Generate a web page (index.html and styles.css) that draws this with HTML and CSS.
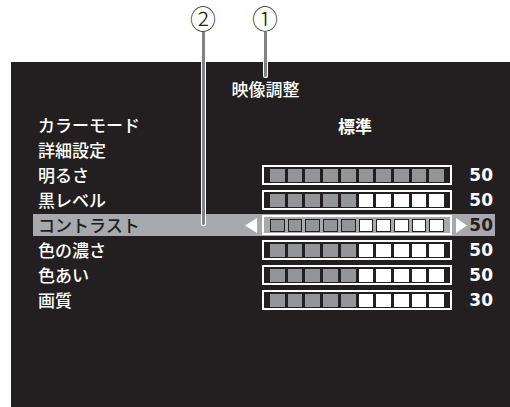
FILE: index.html
```html
<!DOCTYPE html>
<html lang="ja">

<head>
    <meta charset="UTF-8" />
    <meta name="viewport" content="width=device-width, initial-scale=1.0">
    <title>映像調整</title>
    <link rel="stylesheet" href="styles.css">
</head>

<body>
    <div class="page">
        <!-- callouts -->
        <span class="callout callout-2">②</span>
        <span class="callout callout-1">①</span>
        <span class="lead lead-2"></span>
        <span class="lead lead-1"></span>

        <div class="screen">
            <div class="title">映像調整</div>

            <div class="menu">
                <div class="row">
                    <span class="label">カラーモード</span>
                    <span class="mode">標準</span>
                </div>
                <div class="row">
                    <span class="label">詳細設定</span>
                </div>
                <div class="row">
                    <span class="label">明るさ</span>
                    <span class="arrow"></span>
                    <div class="bar">
                        <i class="on"></i><i class="on"></i><i class="on"></i><i class="on"></i><i class="on"></i>
                        <i class="on"></i><i class="on"></i><i class="on"></i><i class="on"></i><i class="on"></i>
                    </div>
                    <span class="arrow"></span>
                    <span class="value">50</span>
                </div>
                <div class="row">
                    <span class="label">黒レベル</span>
                    <span class="arrow"></span>
                    <div class="bar">
                        <i class="on"></i><i class="on"></i><i class="on"></i><i class="on"></i><i class="on"></i>
                        <i></i><i></i><i></i><i></i><i></i>
                    </div>
                    <span class="arrow"></span>
                    <span class="value">50</span>
                </div>
                <div class="row selected">
                    <span class="label">コントラスト</span>
                    <span class="arrow">
                        <svg width="12" height="15" viewBox="0 0 12 15"><polygon points="12,0 12,15 0,7.5" fill="#fff" /></svg>
                    </span>
                    <div class="bar">
                        <i class="on"></i><i class="on"></i><i class="on"></i><i class="on"></i><i class="on"></i>
                        <i></i><i></i><i></i><i></i><i></i>
                    </div>
                    <span class="arrow">
                        <svg width="11" height="15" viewBox="0 0 11 15"><polygon points="0,0 11,7.5 0,15" fill="#fff" /></svg>
                    </span>
                    <span class="value">50</span>
                </div>
                <div class="row">
                    <span class="label">色の濃さ</span>
                    <span class="arrow"></span>
                    <div class="bar">
                        <i class="on"></i><i class="on"></i><i class="on"></i><i class="on"></i><i class="on"></i>
                        <i></i><i></i><i></i><i></i><i></i>
                    </div>
                    <span class="arrow"></span>
                    <span class="value">50</span>
                </div>
                <div class="row">
                    <span class="label">色あい</span>
                    <span class="arrow"></span>
                    <div class="bar">
                        <i class="on"></i><i class="on"></i><i class="on"></i><i class="on"></i><i class="on"></i>
                        <i></i><i></i><i></i><i></i><i></i>
                    </div>
                    <span class="arrow"></span>
                    <span class="value">50</span>
                </div>
                <div class="row">
                    <span class="label">画質</span>
                    <span class="arrow"></span>
                    <div class="bar">
                        <i class="on"></i><i class="on"></i><i class="on"></i><i class="on"></i><i class="on"></i>
                        <i></i><i></i><i></i><i></i><i></i>
                    </div>
                    <span class="arrow"></span>
                    <span class="value">30</span>
                </div>
            </div>
        </div>
    </div>
</body>

</html>
```

FILE: styles.css
```css
body {
    margin: 0;
    background: #fff;
    font-family: "Noto Sans CJK JP", "Noto Sans", sans-serif;
}

.page {
    position: relative;
    width: 510px;
    height: 407px;
    overflow: hidden;
    padding-top: 62px;
    box-sizing: border-box;
}

.callout {
    position: absolute;
    top: 3px;
    font-size: 26px;
    line-height: 30px;
    font-weight: 300;
    color: #231f20;
}

.callout-2 {
    left: 190px;
}

.callout-1 {
    left: 252px;
}

.lead {
    position: absolute;
    z-index: 2;
    width: 3px;
    background: #808285;
    border: 1px solid #fff;
    border-top: none;
    border-radius: 0 0 3px 3px;
}

.lead-2 {
    left: 201px;
    top: 32px;
    height: 193px;
}

.lead-1 {
    left: 263px;
    top: 32px;
    height: 45px;
}

.screen {
    margin-left: 11px;
    height: 345px;
    background: #231f20;
    padding-top: 16px;
    box-sizing: border-box;
    color: #fff;
}

.title {
    height: 22px;
    line-height: 22px;
    font-size: 17px;
    font-weight: 500;
    text-align: center;
    padding-left: 10px;
}

.menu {
    margin: 14px 0 0 22px;
    width: 462px;
    display: flex;
    flex-direction: column;
    gap: 3px;
}

.row {
    height: 22px;
    display: flex;
    align-items: center;
    padding: 0 2px 0 5px;
}

.row.selected {
    background: #a7a9ac;
    color: #231f20;
}

.label {
    flex: 1;
    font-size: 17px;
    font-weight: 500;
    line-height: 22px;
}

.mode {
    width: 190px;
    margin-right: 43px;
    text-align: center;
    font-size: 17px;
    font-weight: 700;
}

.arrow {
    width: 12px;
    height: 15px;
    margin-right: 5px;
    display: flex;
}

.arrow + .bar + .arrow {
    width: 11px;
    margin: 0 1px 0 4px;
}

.bar {
    width: 190px;
    height: 20px;
    box-sizing: border-box;
    border: 2px solid #fff;
    padding: 0 6px;
    display: flex;
    align-items: center;
    gap: 3px;
}

.bar i {
    flex: 1;
    height: 13px;
    background: #fff;
}

.bar i.on {
    background: #939598;
}

.selected .bar i {
    border: 1.5px solid #231f20;
    box-sizing: border-box;
}

.value {
    width: 25px;
    text-align: right;
    font-family: "DejaVu Sans", sans-serif;
    font-weight: 700;
    font-size: 17px;
    line-height: 22px;
}
```
